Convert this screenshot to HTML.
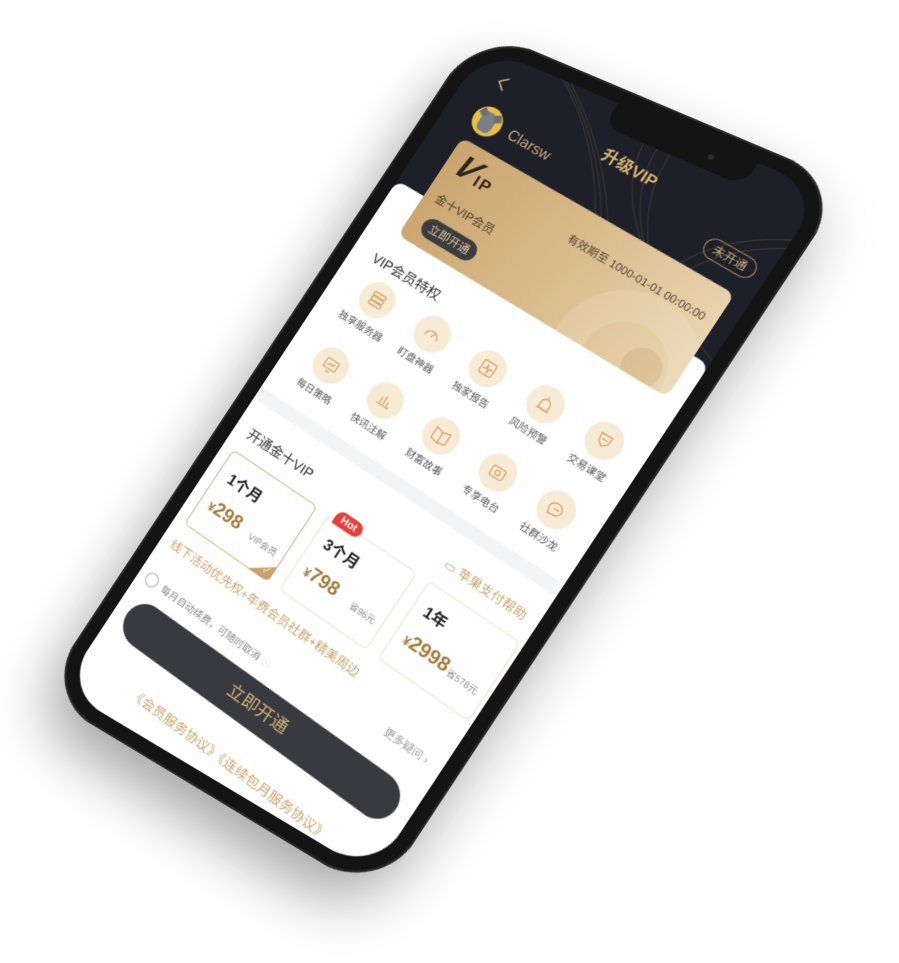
<!DOCTYPE html>
<html><head><meta charset="utf-8">
<style>
*{margin:0;padding:0;box-sizing:border-box}
html,body{width:899px;height:963px;overflow:hidden}
body{background:#fff;position:relative;font-family:"Liberation Sans","Noto Sans CJK SC",sans-serif}
#phone{position:absolute;left:0;top:0;width:400px;height:826px;transform-origin:0 0;
transform:matrix3d(0.78138,0.35943,0,-0.00016623,-0.53138,0.80799,0,0.0000024467,0,0,1,0,480,28,0,1);}
.body{position:absolute;left:0;top:0;width:400px;height:826px;border-radius:64px;background:#141414;box-shadow:0 30px 60px rgba(0,0,0,.35),0 0 0 2px #2a2a2a inset}
.screen{position:absolute;left:16px;top:16px;width:368px;height:794px;border-radius:48px;overflow:hidden;background:#1e2029}
.notch{position:absolute;left:150px;top:0;width:150px;height:27px;background:#141414;border-radius:0 0 18px 18px;z-index:20}
.content{position:absolute;left:0;top:0;width:368px;height:900px;transform:skewY(5.7deg);transform-origin:0 0}
.a{position:absolute;white-space:nowrap}
.panel{position:absolute;left:0;top:165px;width:368px;height:760px;background:#fff;border-radius:10px 10px 0 0}
.card{position:absolute;left:33px;top:93px;width:318px;height:120px;border-radius:9px;background:linear-gradient(100deg,#c9a46f 0%,#d9bb8a 50%,#ead6b2 100%);overflow:hidden;z-index:5}
.ic{position:absolute;width:38px;height:38px;border-radius:50%;background:#f7ebd6;margin:-19px 0 0 -19px}
.ic svg{position:absolute;left:9px;top:9px}
.lb{position:absolute;font-size:10.5px;color:#555;transform:translateX(-50%);white-space:nowrap}
.plan{position:absolute;top:490px;width:108px;height:92px;border:1px solid #f0e3cc;border-radius:6px;background:#fff}
.plan .d{position:absolute;left:12px;top:12px;font-size:16px;font-weight:bold;color:#222}
.plan .p{position:absolute;left:10px;top:48px;font-size:20px;font-weight:bold;color:#a47a3c}
.plan .p small{font-size:13px}
.plan .s{position:absolute;right:8px;top:55px;font-size:9.5px;color:#888}
</style></head><body>
<div id="phone">
<div class="body"></div>
<div class="screen">
<div class="notch"><div style="position:absolute;left:105px;top:10px;width:6px;height:6px;border-radius:50%;background:#2a2d36"></div></div>
<div class="content">
<svg class="a" style="left:0;top:-40px" width="368" height="260" viewBox="0 0 368 260">
<g fill="none" stroke="#8a6e45" stroke-opacity=".35" stroke-width=".8">
<path d="M20 0 Q200 60 240 260"/><path d="M30 0 Q210 70 250 260"/><path d="M40 0 Q220 80 262 260"/>
<path d="M200 0 Q160 120 368 200"/><path d="M215 0 Q175 125 368 210"/><path d="M230 0 Q190 130 368 220"/>
<path d="M368 60 Q250 120 280 260"/><path d="M368 70 Q260 130 292 260"/>
</g></svg>
<svg class="a" style="left:30px;top:15px" width="14" height="18" viewBox="0 0 14 18"><path d="M11 2 L3 9 L11 16" fill="none" stroke="#c9a877" stroke-width="1.6"/></svg>
<div class="a" style="left:6px;width:380px;top:22px;text-align:center;font-size:17px;font-weight:bold;color:#d8b475">升级VIP</div>
<div class="a" style="left:30px;top:50px;width:32px;height:32px;border-radius:50%;background:#e8be45;overflow:hidden">
<div style="position:absolute;left:8px;top:6px;width:16px;height:22px;background:#7d7f86;border-radius:40% 40% 30% 30%"></div>
<div style="position:absolute;left:4px;top:5px;width:8px;height:8px;background:#6d6f75;transform:rotate(30deg)"></div>
<div style="position:absolute;left:20px;top:5px;width:8px;height:8px;background:#6d6f75;transform:rotate(-30deg)"></div></div>
<div class="a" style="left:72px;top:58px;font-size:16px;color:#c9a877">Clarsw</div>
<div class="a" style="left:300px;top:54px;width:56px;height:22px;border:1px solid #a8885a;border-radius:11px;font-size:12px;color:#d1b07c;text-align:center;line-height:20px">未开通</div>
<div class="panel"></div>
<div class="card">
<div class="a" style="left:190px;top:40px;width:150px;height:150px;border-radius:50%;border:32px solid rgba(255,255,255,.13)"></div>
<div class="a" style="left:262px;top:88px;width:40px;height:40px;border-radius:50%;background:rgba(190,150,95,.25)"></div>
<div class="a" style="left:12px;top:6px;font-size:34px;font-weight:bold;font-style:italic;color:#2d2518;transform:skewX(-15deg)">V</div>
<div class="a" style="left:36px;top:22px;font-size:17px;font-weight:bold;color:#2d2518;letter-spacing:2px">IP</div>
<div class="a" style="left:12px;top:56px;font-size:12.5px;color:#4e3f28">金十VIP会员</div>
<div class="a" style="left:16px;top:86px;width:64px;height:22px;border-radius:11px;background:#3b3c42;color:#e5cc9c;font-size:12px;text-align:center;line-height:22px">立即开通</div>
<div class="a" style="right:12px;top:26px;font-size:11.5px;color:#4e4434">有效期至 1000-01-01 00:00:00</div>
</div>
<div class="a" style="left:24px;top:234px;font-size:14.5px;color:#333">VIP会员特权</div>

<div class="ic" style="left:53px;top:281px"><svg width="20" height="20" viewBox="0 0 20 20" fill="none" stroke="#d3a96a" stroke-width="1.4"><rect x="3" y="3" width="14" height="4" rx="2"/><rect x="3" y="8" width="14" height="4" rx="2"/><rect x="3" y="13" width="14" height="4" rx="2"/></svg></div>
<div class="ic" style="left:121px;top:281px"><svg width="20" height="20" viewBox="0 0 20 20" fill="none" stroke="#d3a96a" stroke-width="1.4"><path d="M3 14 A7 7 0 1 1 17 14"/><path d="M10 13 L13 8"/></svg></div>
<div class="ic" style="left:188px;top:281px"><svg width="20" height="20" viewBox="0 0 20 20" fill="none" stroke="#d3a96a" stroke-width="1.4"><rect x="3" y="3" width="14" height="14" rx="2"/><path d="M5 11 L8 11 L9 7 L11 14 L12 10 L15 10"/></svg></div>
<div class="ic" style="left:256px;top:281px"><svg width="20" height="20" viewBox="0 0 20 20" fill="none" stroke="#d3a96a" stroke-width="1.4"><path d="M5 16 L5 10 A5 5 0 0 1 15 10 L15 16 Z"/><path d="M3 16 L17 16 M10 2 L10 4"/></svg></div>
<div class="ic" style="left:324px;top:281px"><svg width="20" height="20" viewBox="0 0 20 20" fill="none" stroke="#d3a96a" stroke-width="1.4"><path d="M4 4 L16 4 L15 12 L10 16 L5 12 Z"/><path d="M7 9 L13 9"/></svg></div>
<div class="lb" style="left:53px;top:305px">独享服务器</div>
<div class="lb" style="left:121px;top:305px">盯盘神器</div>
<div class="lb" style="left:188px;top:305px">独家报告</div>
<div class="lb" style="left:256px;top:305px">风险预警</div>
<div class="lb" style="left:324px;top:305px">交易课堂</div>

<div class="ic" style="left:50px;top:363px"><svg width="20" height="20" viewBox="0 0 20 20" fill="none" stroke="#d3a96a" stroke-width="1.4"><rect x="3" y="4" width="14" height="10" rx="1"/><path d="M6 11 L9 8 L11 10 L14 7 M8 17 L12 17"/></svg></div>
<div class="ic" style="left:118px;top:363px"><svg width="20" height="20" viewBox="0 0 20 20" fill="none" stroke="#d3a96a" stroke-width="1.4"><path d="M3 16 L17 16 M6 15 L6 8 M10 15 L10 5 M14 15 L14 10"/></svg></div>
<div class="ic" style="left:186px;top:363px"><svg width="20" height="20" viewBox="0 0 20 20" fill="none" stroke="#d3a96a" stroke-width="1.4"><path d="M2 4 L10 6 L18 4 L18 16 L10 18 L2 16 Z M10 6 L10 18"/></svg></div>
<div class="ic" style="left:254px;top:363px"><svg width="20" height="20" viewBox="0 0 20 20" fill="none" stroke="#d3a96a" stroke-width="1.4"><rect x="3" y="5" width="14" height="11" rx="2"/><circle cx="10" cy="10.5" r="2.5"/></svg></div>
<div class="ic" style="left:322px;top:363px"><svg width="20" height="20" viewBox="0 0 20 20" fill="none" stroke="#d3a96a" stroke-width="1.4"><path d="M3 13 A7 6 0 1 1 8 16 L4 17 Z"/><path d="M7 10 L13 10"/></svg></div>
<div class="lb" style="left:50px;top:387px">每日策略</div>
<div class="lb" style="left:118px;top:387px">快讯注解</div>
<div class="lb" style="left:186px;top:387px">财富故事</div>
<div class="lb" style="left:254px;top:387px">专享电台</div>
<div class="lb" style="left:322px;top:387px">社群沙龙</div>

<div class="a" style="left:0;top:420px;width:368px;height:14px;background:#f3f4f6"></div>
<div class="a" style="left:16px;top:456px;font-size:14.5px;color:#333">开通金十VIP</div>
<div class="a" style="right:14px;top:456px;font-size:13px;color:#c9a26a">▭ 苹果支付帮助</div>

<div class="plan" style="left:12px;border-color:#d3b27f">
<div class="d">1个月</div><div class="p"><small>¥</small>298</div><div class="s">VIP会员</div>
<div class="a" style="right:-1px;bottom:-1px;width:0;height:0;border-left:26px solid transparent;border-bottom:18px solid #c9a26a;border-radius:0 0 6px 0"></div>
<div class="a" style="right:4px;bottom:2px;font-size:9px;color:#fff">✓</div>
</div>
<div class="plan" style="left:134px">
<div class="a" style="left:6px;top:-11px;background:#e4403a;color:#fff;font-size:11px;font-weight:bold;padding:2px 7px;border-radius:8px 8px 8px 0">Hot</div>
<div class="d">3个月</div><div class="p"><small>¥</small>798</div><div class="s">省96元</div></div>
<div class="plan" style="left:256px">
<div class="d">1年</div><div class="p"><small>¥</small>2998</div><div class="s">省578元</div></div>

<div class="a" style="left:12px;top:595px;font-size:13px;color:#c9a26a">线下活动优先权+年费会员社群+精美周边</div>
<div class="a" style="left:9px;top:641px;width:15px;height:15px;border-radius:50%;border:1px solid #aaa"></div>
<div class="a" style="left:30px;top:642px;font-size:10.5px;color:#888">每月自动续费，可随时取消 <span style="color:#ccd">ⓘ</span></div>
<div class="a" style="right:16px;top:628px;font-size:11px;color:#999">更多疑问 ›</div>
<div class="a" style="left:14px;top:669px;width:338px;height:46px;border-radius:23px;background:#393a3f;color:#d4b27a;font-size:18px;text-align:center;line-height:46px">立即开通</div>
<div class="a" style="left:4px;width:368px;top:744px;text-align:center;font-size:14px;color:#c9a26a">《会员服务协议》《连续包月服务协议》</div>
</div>
</div>
</div>
</body></html>
